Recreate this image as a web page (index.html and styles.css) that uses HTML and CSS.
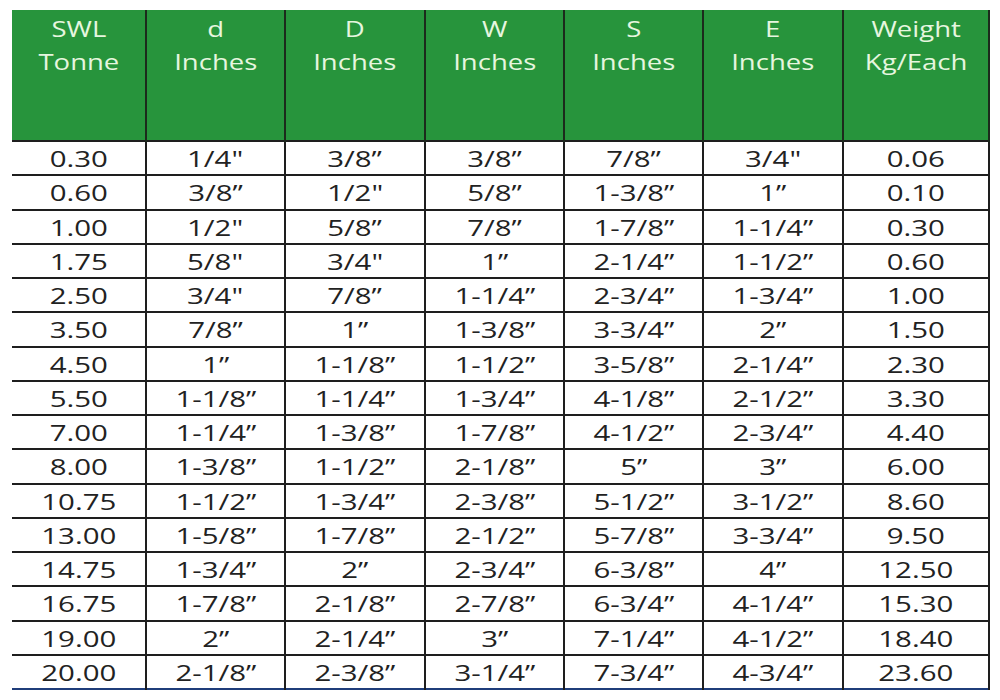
FILE: index.html
```html
<!DOCTYPE html>
<html>
<head>
<meta charset="utf-8">
<link rel="stylesheet" href="styles.css">
</head>
<body>
<table class="chart">
  <colgroup>
    <col class="c1"><col class="c2"><col class="c3"><col class="c4"><col class="c5"><col class="c6"><col class="c7">
  </colgroup>
  <thead>
    <tr>
      <th><span class="t">SWL<br>Tonne</span></th>
      <th><span class="t">d<br>Inches</span></th>
      <th><span class="t">D<br>Inches</span></th>
      <th><span class="t">W<br>Inches</span></th>
      <th><span class="t">S<br>Inches</span></th>
      <th><span class="t">E<br>Inches</span></th>
      <th><span class="t">Weight<br>Kg/Each</span></th>
    </tr>
  </thead>
  <tbody>
    <tr><td><span class="t">0.30</span></td><td><span class="t">1/4"</span></td><td><span class="t">3/8”</span></td><td><span class="t">3/8”</span></td><td><span class="t">7/8”</span></td><td><span class="t">3/4"</span></td><td><span class="t">0.06</span></td></tr>
    <tr><td><span class="t">0.60</span></td><td><span class="t">3/8”</span></td><td><span class="t">1/2"</span></td><td><span class="t">5/8”</span></td><td><span class="t">1-3/8”</span></td><td><span class="t">1”</span></td><td><span class="t">0.10</span></td></tr>
    <tr><td><span class="t">1.00</span></td><td><span class="t">1/2"</span></td><td><span class="t">5/8”</span></td><td><span class="t">7/8”</span></td><td><span class="t">1-7/8”</span></td><td><span class="t">1-1/4”</span></td><td><span class="t">0.30</span></td></tr>
    <tr><td><span class="t">1.75</span></td><td><span class="t">5/8"</span></td><td><span class="t">3/4"</span></td><td><span class="t">1”</span></td><td><span class="t">2-1/4”</span></td><td><span class="t">1-1/2”</span></td><td><span class="t">0.60</span></td></tr>
    <tr><td><span class="t">2.50</span></td><td><span class="t">3/4"</span></td><td><span class="t">7/8”</span></td><td><span class="t">1-1/4”</span></td><td><span class="t">2-3/4”</span></td><td><span class="t">1-3/4”</span></td><td><span class="t">1.00</span></td></tr>
    <tr><td><span class="t">3.50</span></td><td><span class="t">7/8”</span></td><td><span class="t">1”</span></td><td><span class="t">1-3/8”</span></td><td><span class="t">3-3/4”</span></td><td><span class="t">2”</span></td><td><span class="t">1.50</span></td></tr>
    <tr><td><span class="t">4.50</span></td><td><span class="t">1”</span></td><td><span class="t">1-1/8”</span></td><td><span class="t">1-1/2”</span></td><td><span class="t">3-5/8”</span></td><td><span class="t">2-1/4”</span></td><td><span class="t">2.30</span></td></tr>
    <tr><td><span class="t">5.50</span></td><td><span class="t">1-1/8”</span></td><td><span class="t">1-1/4”</span></td><td><span class="t">1-3/4”</span></td><td><span class="t">4-1/8”</span></td><td><span class="t">2-1/2”</span></td><td><span class="t">3.30</span></td></tr>
    <tr><td><span class="t">7.00</span></td><td><span class="t">1-1/4”</span></td><td><span class="t">1-3/8”</span></td><td><span class="t">1-7/8”</span></td><td><span class="t">4-1/2”</span></td><td><span class="t">2-3/4”</span></td><td><span class="t">4.40</span></td></tr>
    <tr><td><span class="t">8.00</span></td><td><span class="t">1-3/8”</span></td><td><span class="t">1-1/2”</span></td><td><span class="t">2-1/8”</span></td><td><span class="t">5”</span></td><td><span class="t">3”</span></td><td><span class="t">6.00</span></td></tr>
    <tr><td><span class="t">10.75</span></td><td><span class="t">1-1/2”</span></td><td><span class="t">1-3/4”</span></td><td><span class="t">2-3/8”</span></td><td><span class="t">5-1/2”</span></td><td><span class="t">3-1/2”</span></td><td><span class="t">8.60</span></td></tr>
    <tr><td><span class="t">13.00</span></td><td><span class="t">1-5/8”</span></td><td><span class="t">1-7/8”</span></td><td><span class="t">2-1/2”</span></td><td><span class="t">5-7/8”</span></td><td><span class="t">3-3/4”</span></td><td><span class="t">9.50</span></td></tr>
    <tr><td><span class="t">14.75</span></td><td><span class="t">1-3/4”</span></td><td><span class="t">2”</span></td><td><span class="t">2-3/4”</span></td><td><span class="t">6-3/8”</span></td><td><span class="t">4”</span></td><td><span class="t">12.50</span></td></tr>
    <tr><td><span class="t">16.75</span></td><td><span class="t">1-7/8”</span></td><td><span class="t">2-1/8”</span></td><td><span class="t">2-7/8”</span></td><td><span class="t">6-3/4”</span></td><td><span class="t">4-1/4”</span></td><td><span class="t">15.30</span></td></tr>
    <tr><td><span class="t">19.00</span></td><td><span class="t">2”</span></td><td><span class="t">2-1/4”</span></td><td><span class="t">3”</span></td><td><span class="t">7-1/4”</span></td><td><span class="t">4-1/2”</span></td><td><span class="t">18.40</span></td></tr>
    <tr><td><span class="t">20.00</span></td><td><span class="t">2-1/8”</span></td><td><span class="t">2-3/8”</span></td><td><span class="t">3-1/4”</span></td><td><span class="t">7-3/4”</span></td><td><span class="t">4-3/4”</span></td><td><span class="t">23.60</span></td></tr>
  </tbody>
</table>
</body>
</html>
```

FILE: styles.css
```css
html, body {
  margin: 0;
  padding: 0;
  background: #ffffff;
}

body {
  padding: 10px 0 0 12px;
  font-family: "Open Sans", "Liberation Sans", sans-serif;
}

.chart {
  border-collapse: collapse;
  table-layout: fixed;
  width: 977px;
  border-bottom: 2px solid #1f3d7a;
}

.c1 { width: 134px; }
.c2 { width: 139px; }
.c3 { width: 140px; }
.c4 { width: 139px; }
.c5 { width: 139px; }
.c6 { width: 140px; }
.c7 { width: 146px; }

.chart th {
  height: 131px;
  padding: 3px 0 0 0;
  vertical-align: top;
  background: #27943c;
  color: #e6f6df;
  font-weight: 400;
  font-size: 21px;
  line-height: 33px;
  border-left: 2px solid #1c2a1c;
  box-sizing: border-box;
}

.chart th:first-child {
  border-left: none;
}

.chart th:last-child {
  border-right: 2px solid #1c2a1c;
}

.chart td {
  height: 34.25px;
  padding: 2px 0 0 0;
  text-align: center;
  vertical-align: middle;
  color: #222222;
  font-weight: 400;
  font-size: 21px;
  line-height: 30px;
  border-top: 2px solid #1e1e1e;
  border-left: 2px solid #1e1e1e;
  box-sizing: border-box;
}

.chart td:first-child {
  border-left: none;
}

.chart td:last-child {
  border-right: 2px solid #1e1e1e;
}

.t {
  display: inline-block;
  transform: scaleX(1.4);
  transform-origin: center;
  white-space: nowrap;
}

.chart th .t {
  transform: scaleX(1.31);
}
```
